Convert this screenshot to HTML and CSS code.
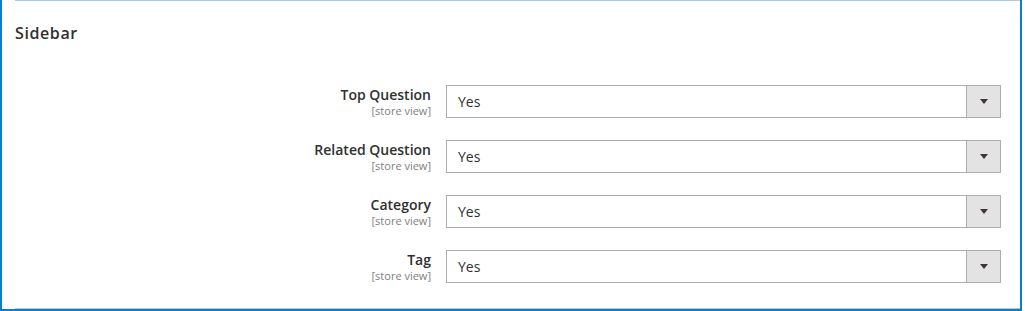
FILE: index.html
```html
<!DOCTYPE html>
<html lang="en">
<head>
  <meta charset="UTF-8" />
  <title>Sidebar</title>
  <link rel="stylesheet" href="styles.css">
</head>
<body>
  <div class="frame">
    <div class="section">
      <h2 class="section-title">Sidebar</h2>

      <div class="fields">
        <div class="field">
          <div class="field-label">
            <span class="label-text">Top Question</span>
            <span class="scope">[store view]</span>
          </div>
          <div class="select">
            <span class="select-value">Yes</span>
            <span class="select-arrow"></span>
          </div>
        </div>

        <div class="field">
          <div class="field-label">
            <span class="label-text">Related Question</span>
            <span class="scope">[store view]</span>
          </div>
          <div class="select">
            <span class="select-value">Yes</span>
            <span class="select-arrow"></span>
          </div>
        </div>

        <div class="field">
          <div class="field-label">
            <span class="label-text">Category</span>
            <span class="scope">[store view]</span>
          </div>
          <div class="select">
            <span class="select-value">Yes</span>
            <span class="select-arrow"></span>
          </div>
        </div>

        <div class="field">
          <div class="field-label">
            <span class="label-text">Tag</span>
            <span class="scope">[store view]</span>
          </div>
          <div class="select">
            <span class="select-value">Yes</span>
            <span class="select-arrow"></span>
          </div>
        </div>
      </div>
    </div>
  </div>
</body>
</html>
```

FILE: styles.css
```css
body {
  margin: 0;
  padding: 0;
  background-color: #ffffff;
  font-family: "Open Sans", "Liberation Sans", sans-serif;
  color: #303030;
}
.frame {
  width: 1018px;
  height: 309px;
  border-left: 2px solid #0a7ec8;
  border-right: 2px solid #0a7ec8;
  border-bottom: 2px solid #0a7ec8;
}
.section {
  margin-left: 13px;
  height: 307px;
  border-top: 1px solid #a5cdea;
  border-bottom: 1px solid #c4c4c4;
}
.section-title {
  margin: 0;
  padding-top: 22px;
  height: 84px;
  box-sizing: border-box;
  font-size: 16px;
  font-weight: 600;
  letter-spacing: 0.6px;
  line-height: 20px;
  color: #303030;
}
.fields {
  display: flex;
  flex-direction: column;
  gap: 22px;
}
.field {
  display: grid;
  grid-template-columns: 416px 555px;
  column-gap: 15px;
}
.field-label {
  display: flex;
  flex-direction: column;
  align-items: flex-end;
  padding-top: 1px;
}
.label-text {
  font-size: 14px;
  font-weight: 600;
  line-height: 18px;
}
.scope {
  font-size: 11px;
  line-height: 13px;
  color: #808080;
}
.select {
  display: flex;
  height: 33px;
  box-sizing: border-box;
  border: 1px solid #adadad;
}
.select-value {
  flex: 1;
  padding-left: 11px;
  font-size: 14px;
  line-height: 31px;
}
.select-arrow {
  position: relative;
  width: 33px;
  background-color: #e3e3e3;
  border-left: 1px solid #adadad;
}
.select-arrow::after {
  content: "";
  position: absolute;
  left: 13px;
  top: 13px;
  border-left: 4px solid transparent;
  border-right: 4px solid transparent;
  border-top: 5px solid #41362f;
}
```
